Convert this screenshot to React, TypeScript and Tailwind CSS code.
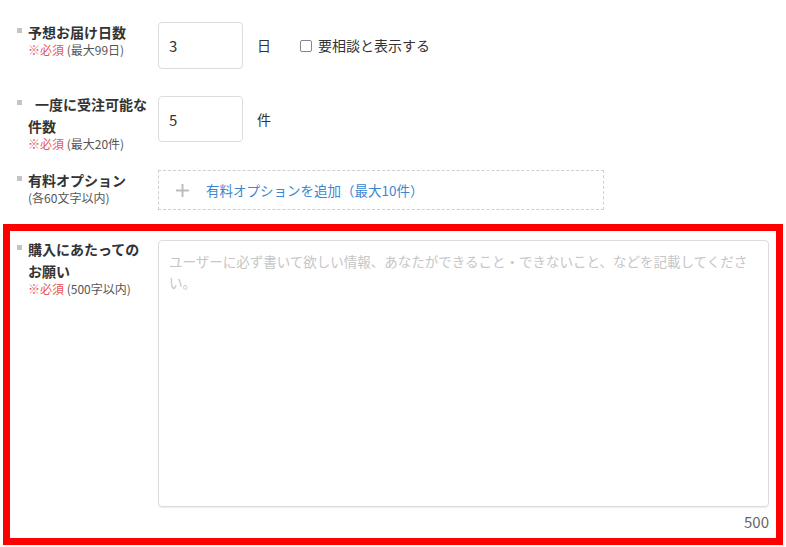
const font = "font-['Noto_Sans_CJK_JP','Noto_Sans',sans-serif]";

const Bullet = () => (
  <span className="mt-[7px] mr-[6px] block h-[5px] w-[5px] shrink-0 bg-[#c4c4c4]" />
);

const Required = ({ note }: { note: string }) => (
  <div className="text-[12px] leading-[14px]">
    <span className="text-[#e8555a]">※必須</span>{" "}
    <span className="text-[#555]">{note}</span>
  </div>
);

const App = () => {
  return (
    <div className={`${font} min-h-[547px] w-[786px] bg-white pt-[21px] text-[#333]`}>
      <div className="px-[17px]">
        {/* 予想お届け日数 */}
        <div className="grid grid-cols-[141px_1fr]">
          <div className="flex">
            <Bullet />
            <div>
              <div className="text-[14px] leading-[22px] font-bold">予想お届け日数</div>
              <Required note="(最大99日)" />
            </div>
          </div>
          <div className="mt-[1px] flex items-center">
            <input
              readOnly
              value="3"
              className="h-[47px] w-[85px] rounded-[4px] border border-[#dcdcdc] pl-[10px] text-[15px] text-[#333] outline-none"
            />
            <span className="ml-[14px] text-[14px]">日</span>
            <label className="ml-[29px] flex items-center text-[14px]">
              <span className="mr-[6px] block h-[12px] w-[12px] rounded-[2px] border border-[#888] bg-white" />
              要相談と表示する
            </label>
          </div>
        </div>

        {/* 一度に受注可能な件数 */}
        <div className="mt-[24px] grid grid-cols-[141px_1fr]">
          <div className="flex">
            <Bullet />
            <div>
              <div className="text-[14px] leading-[22px] font-bold">
                <span className="inline-block w-[7px]" />
                一度に受注可能な
                <br />
                件数
              </div>
              <Required note="(最大20件)" />
            </div>
          </div>
          <div className="mt-[3px] flex items-center self-start">
            <input
              readOnly
              value="5"
              className="h-[46px] w-[85px] rounded-[4px] border border-[#dcdcdc] pl-[10px] text-[15px] text-[#333] outline-none"
            />
            <span className="ml-[14px] text-[14px]">件</span>
          </div>
        </div>

        {/* 有料オプション */}
        <div className="mt-[18px] grid grid-cols-[141px_1fr]">
          <div className="flex">
            <Bullet />
            <div>
              <div className="text-[14px] leading-[22px] font-bold">有料オプション</div>
              <div className="text-[12px] leading-[14px] text-[#555]">(各60文字以内)</div>
            </div>
          </div>
          <div className="mt-[1px] flex h-[40px] w-[446px] items-center border border-dashed border-[#cfcfcf] pl-[16px]">
            <svg width="15" height="15" viewBox="0 0 15 15" className="shrink-0">
              <path d="M7.5 1v13M1 7.5h13" stroke="#bdbdbd" strokeWidth="2" />
            </svg>
            <span className="ml-[16px] text-[13.5px] text-[#3b86cf]">
              有料オプションを追加（最大10件）
            </span>
          </div>
        </div>
      </div>

      {/* 購入にあたってのお願い */}
      <div className="mx-[3px] mt-[14px] w-[780px] border-[7px] border-[#ff0000] px-[7px] pt-[7px] pb-[7px]">
        <div className="grid grid-cols-[141px_1fr]">
          <div className="flex">
            <Bullet />
            <div>
              <div className="text-[14px] leading-[22px] font-bold">
                購入にあたっての
                <br />
                お願い
              </div>
              <Required note="(500字以内)" />
            </div>
          </div>
          <div className="mt-[2px]">
            <textarea
              placeholder="ユーザーに必ず書いて欲しい情報、あなたができること・できないこと、などを記載してください。"
              className="block h-[267px] w-full resize-none rounded-[4px] border border-[#dcdcdc] px-[10px] pt-[10px] text-[13.5px] leading-[21px] shadow-[0_1px_1px_rgba(0,0,0,0.08)] outline-none placeholder:text-[#c6c6c6]"
            />
            <div className="mt-[5px] text-right text-[15px] leading-[19px] text-[#666]">500</div>
          </div>
        </div>
      </div>
    </div>
  );
};

export default App;
